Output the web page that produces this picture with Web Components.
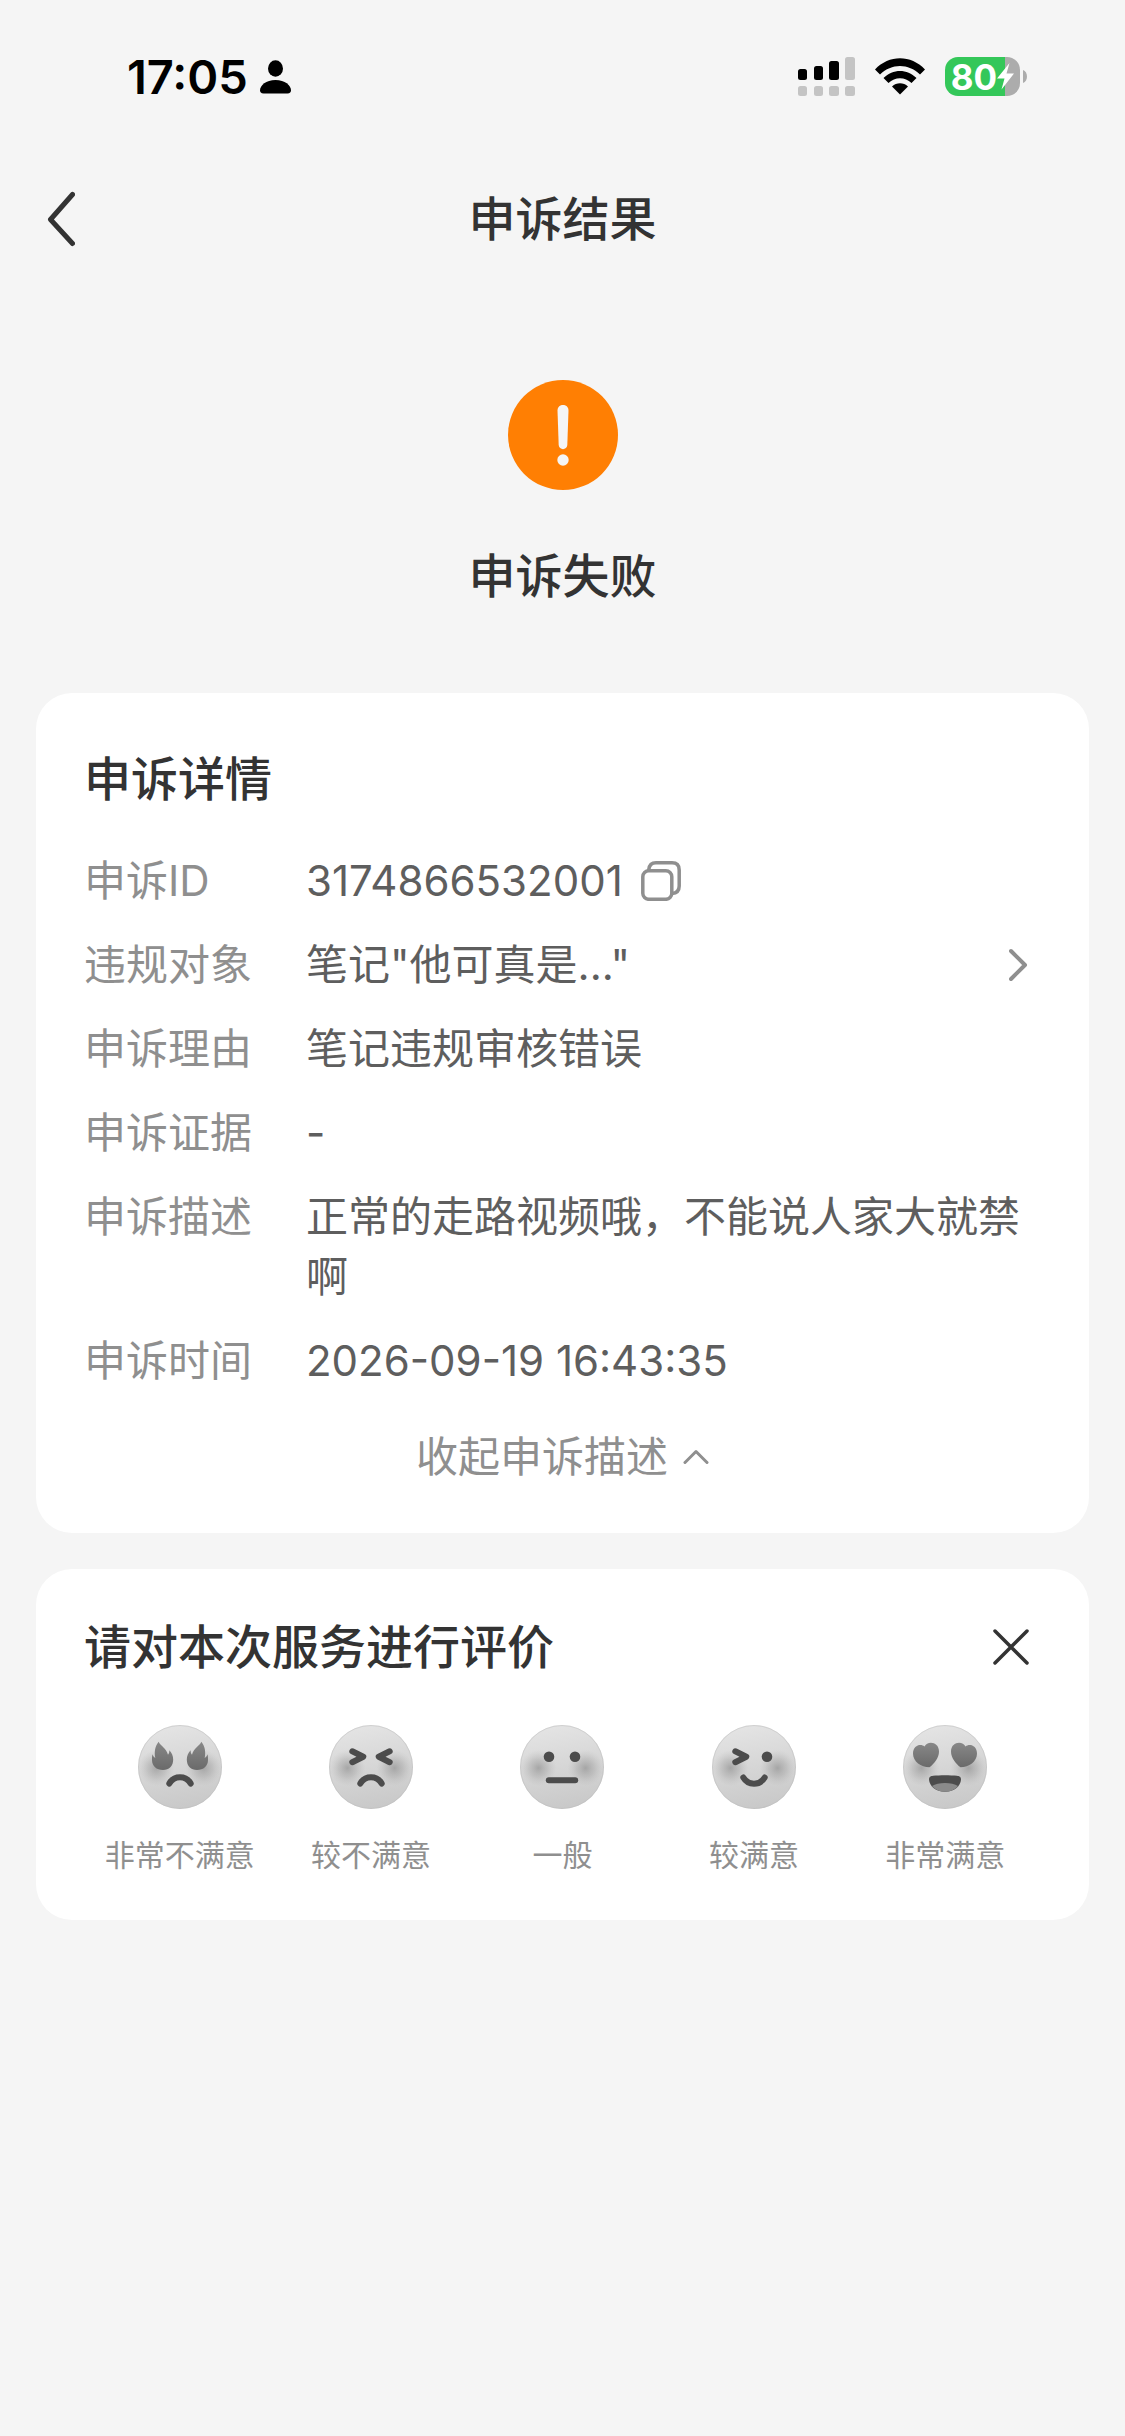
<!DOCTYPE html>
<html lang="zh-CN">
<head>
<meta charset="utf-8">
<meta name="viewport" content="width=device-width, initial-scale=1">
<title>申诉结果</title>
<style>
    body {
        margin: 0;
        background-color: #f5f5f5;
        color: #333;
        font-family: Inter, "Noto Sans CJK SC", sans-serif;
        font-size: 42px;
        line-height: 60px;
    }
    main {
        display: flex;
        flex-direction: column;
        gap: 36px;
        padding: 0 36px 36px;
    }
</style>
</head>
<body>
<status-bar time="17:05" battery="80"></status-bar>
<nav-bar>申诉结果</nav-bar>
<main>
    <result-banner>申诉失败</result-banner>
    <appeal-detail>
        <span slot="title">申诉详情</span>
        <detail-row label="申诉ID">3174866532001<copy-button slot="after"></copy-button></detail-row>
        <detail-row label="违规对象" link>笔记"他可真是..."</detail-row>
        <detail-row label="申诉理由">笔记违规审核错误</detail-row>
        <detail-row label="申诉证据">-</detail-row>
        <detail-row label="申诉描述">正常的走路视频哦，不能说人家大就禁啊</detail-row>
        <detail-row label="申诉时间">2026-09-19 16:43:35</detail-row>
        <span slot="toggle">收起申诉描述</span>
    </appeal-detail>
    <rating-card>请对本次服务进行评价</rating-card>
</main>

<script>
const makeTemplate = html => {
    const template = document.createElement('template');
    template.innerHTML = html;
    return template;
};

class BaseElement extends HTMLElement {
    constructor() {
        super();
        this._shadowRoot = this.attachShadow({ mode: 'open' });
        this._shadowRoot.appendChild(this.constructor.template.content.cloneNode(true));
    }
}

class StatusBar extends BaseElement {
    static template = makeTemplate(`
        <style>
            :host {
                display: flex;
                justify-content: space-between;
                align-items: center;
                height: 153px;
                padding: 0 98px 0 127px;
                color: #000;
            }
            .left, .right {
                display: flex;
                align-items: center;
            }
            .left { gap: 12px; }
            .right { gap: 20px; }
            .time {
                font-size: 47px;
                font-weight: 600;
            }
            svg { display: block; }
            .power {
                display: flex;
                align-items: center;
                gap: 3px;
            }
            .battery {
                display: flex;
                align-items: center;
                justify-content: center;
                box-sizing: border-box;
                width: 75px;
                height: 39px;
                border-radius: 13px;
                background: linear-gradient(90deg, #34c759 80%, #acacac 80%);
                color: #fff;
                font-size: 35px;
                font-weight: 700;
            }
        </style>
        <div class="left">
            <span class="time"></span>
            <svg width="31" height="34" viewBox="0 0 31 34">
                <ellipse cx="15.500" cy="8.500" rx="7.500" ry="8.200"/>
                <path d="M3.500 33.500C1 33.500 0 32.200 0 30.300C0 25.500 6 20 15.500 20S31 25.500 31 30.300C31 32.200 30 33.500 27.500 33.500Z"/>
            </svg>
        </div>
        <div class="right">
            <svg width="57" height="39" viewBox="0 0 57 39">
                <rect y="12" width="9" height="11" rx="2.500"/>
                <rect x="16" y="9" width="9" height="14" rx="2.500"/>
                <rect x="31" y="4" width="10" height="19" rx="2.500"/>
                <g fill="#c4c4c4">
                    <rect x="47" y="0" width="10" height="23" rx="2.500"/>
                    <rect y="29" width="9" height="10" rx="2.500"/>
                    <rect x="16" y="29" width="9" height="10" rx="2.500"/>
                    <rect x="31" y="29" width="10" height="10" rx="2.500"/>
                    <rect x="47" y="29" width="10" height="10" rx="2.500"/>
                </g>
            </svg>
            <svg width="50" height="37" viewBox="0 0 50 37">
                <path d="M0 11.500C14-3.500 36-3.500 50 11.500L45 16.500C33.500 5 16.500 5 5 16.500Z"/>
                <path d="M8.500 20C18 10.500 32 10.500 41.500 20L36.500 25C30 18.700 20 18.700 13.500 25Z"/>
                <path d="M17 28.500C21.500 24.200 28.500 24.200 33 28.500L25 36.500Z"/>
            </svg>
            <div class="power">
                <div class="battery">
                    <span class="level"></span>
                    <svg width="17" height="27" viewBox="0 0 17 27">
                        <path fill="#fff" d="M12.500 0L0 15.500H7.500L4.500 26.500L17 10.500H9.500Z"/>
                    </svg>
                </div>
                <svg width="4" height="13" viewBox="0 0 4 13"><path fill="#acacac" d="M0 0C5.300 2 5.300 11 0 13Z"/></svg>
            </div>
        </div>
    `);
    connectedCallback() {
        this._shadowRoot.querySelector('.time').textContent = this.getAttribute('time');
        this._shadowRoot.querySelector('.level').textContent = this.getAttribute('battery');
    }
}

class NavBar extends BaseElement {
    static template = makeTemplate(`
        <style>
            :host {
                display: grid;
                grid-template-columns: 120px 1fr 120px;
                align-items: center;
                height: 132px;
            }
            button {
                justify-self: start;
                padding: 0 45px;
                border: 0;
                background: none;
            }
            svg { display: block; }
            h1 {
                margin: 0;
                text-align: center;
                font-size: 47px;
                font-weight: 500;
            }
        </style>
        <button type="button" aria-label="返回">
            <svg width="30" height="56" viewBox="0 0 30 56" fill="none" stroke="#333" stroke-width="5" stroke-linecap="round" stroke-linejoin="round">
                <path d="M27.500 3.500L5.500 28.500L27.500 52.500"/>
            </svg>
        </button>
        <h1><slot></slot></h1>
    `);
}

class ResultBanner extends BaseElement {
    static template = makeTemplate(`
        <style>
            :host {
                display: flex;
                flex-direction: column;
                align-items: center;
                gap: 50px;
                padding: 95px 0 45px;
            }
            h2 {
                margin: 0;
                font-size: 47px;
                font-weight: 500;
                line-height: 72px;
            }
        </style>
        <svg width="110" height="110" viewBox="0 0 110 110">
            <circle cx="55" cy="55" r="55" fill="#ff7f03"/>
            <path fill="#f5f5f5" d="M49.500 30.500C49.500 23.200 60.500 23.200 60.500 30.500L59.300 65C59 70.500 51 70.500 50.700 65Z"/>
            <circle cx="55" cy="80" r="5.700" fill="#f5f5f5"/>
        </svg>
        <h2><slot></slot></h2>
    `);
}

class AppealDetail extends BaseElement {
    static template = makeTemplate(`
        <style>
            :host {
                display: block;
                padding: 50px 48px 46px;
                border-radius: 36px;
                background-color: #fff;
            }
            h2 {
                margin: 0 0 36px;
                font-size: 47px;
                font-weight: 500;
                line-height: 72px;
            }
            .rows {
                display: flex;
                flex-direction: column;
                gap: 24px;
            }
            button {
                display: flex;
                align-items: center;
                gap: 15px;
                margin: 36px auto 0;
                padding: 0;
                border: 0;
                background: none;
                color: #8f8f8f;
                font: inherit;
            }
        </style>
        <h2><slot name="title"></slot></h2>
        <div class="rows"><slot></slot></div>
        <button type="button">
            <slot name="toggle"></slot>
            <svg width="26" height="18" viewBox="0 0 26 18" fill="none" stroke="#8f8f8f" stroke-width="3" stroke-linecap="round" stroke-linejoin="round">
                <path d="M2 14.500L13 3.500L24 14.500"/>
            </svg>
        </button>
    `);
}

class DetailRow extends BaseElement {
    static template = makeTemplate(`
        <style>
            :host {
                display: grid;
                grid-template-columns: 222px 1fr auto;
            }
            .label { color: #8f8f8f; }
            .value {
                display: flex;
                align-items: center;
                gap: 18px;
                color: #5e5e5e;
            }
            .go {
                display: none;
                align-self: center;
                padding: 0 12px;
            }
            :host([link]) .go { display: block; }
            svg { display: block; }
        </style>
        <span class="label"></span>
        <div class="value"><span><slot></slot></span><slot name="after"></slot></div>
        <a class="go" href="#" aria-label="查看">
            <svg width="20" height="34" viewBox="0 0 20 34" fill="none" stroke="#8f8f8f" stroke-width="4" stroke-linecap="round" stroke-linejoin="round">
                <path d="M2 3L16 17L2 31"/>
            </svg>
        </a>
    `);
    connectedCallback() {
        this._shadowRoot.querySelector('.label').textContent = this.getAttribute('label');
    }
}

class CopyButton extends BaseElement {
    static template = makeTemplate(`
        <style>
            :host { display: block; }
            button {
                display: block;
                padding: 0;
                border: 0;
                background: none;
            }
            svg { display: block; }
        </style>
        <button type="button" aria-label="复制">
            <svg width="40" height="40" viewBox="0 0 40 40" fill="none" stroke="#8f8f8f" stroke-width="3.500">
                <rect x="1.800" y="9.800" width="29" height="28.500" rx="6"/>
                <path d="M7.800 9.500V8.500Q8.500 1.800 15 1.800H31Q38.200 1.800 38.200 9V25Q38.200 32 31 32.500"/>
            </svg>
        </button>
    `);
}

const flame = '<path d="M20.700 16.700C22 20.500 28.500 23 30 29.800C31 28.500 31.500 27 31.300 25.300C33.800 28 35.200 31 35.200 34.500C35.200 41 31 45 25 45C18.500 45 14 41 14 35C14 32.500 14 31 14.600 29.300C15 31 15.800 32.300 17.300 33C16 27 17 21 20.700 16.700Z"/>';
const heart = '<path d="M26.500 42.300C18 42.300 10 36.500 10 28.500C10 20 18 18.300 21.500 21.500C24 15.500 36 16 36 26.500C36 33 31 39 26.500 42.300Z"/>';
const bothEyes = shape => `<g fill="url(#shade)">${shape}<g transform="translate(84 0) scale(-1 1)">${shape}</g></g>`;
const line = d => `<path class="line" d="${d}"/>`;
const dot = x => `<circle cx="${x}" cy="31.700" r="5.300" fill="#4c4c4c"/>`;

const squintLeft = line('M23.300 26.300L34.300 31.700L23.300 37.200');
const squintRight = line('M60.700 26.300L49.700 31.700L60.700 37.200');
const frown = line('M31.300 58.500C36 50 48 50 52.700 58.500');
const smile = line('M31.300 52.500C36 60.700 48 60.700 52.700 52.500');

const faces = {
    angry: bothEyes(flame) + frown,
    upset: squintLeft + squintRight + frown,
    neutral: dot(29) + dot(55) + line('M28.800 55.300H55.200'),
    happy: squintLeft + dot(55) + smile,
    love: bothEyes(heart) + `
        <path fill="#4c4c4c" d="M26 54.500C26 51.500 28 51 30 50.700C37 50 47 50 54 50.700C56 51 58 51.500 58 54.500C57.500 61.500 51 66.800 42 66.800S26.500 61.500 26 54.500Z"/>
        <path fill="#8a8a8a" d="M29 61C35 57 49 57 55 61C52 64.700 47.500 66.800 42 66.800S32 64.700 29 61Z"/>`
};

class RatingFace extends BaseElement {
    static template = makeTemplate(`
        <style>
            :host { display: block; }
            svg { display: block; }
            .line {
                fill: none;
                stroke: #4c4c4c;
                stroke-width: 6;
                stroke-linecap: round;
                stroke-linejoin: round;
            }
        </style>
        <div></div>
    `);
    connectedCallback() {
        this._shadowRoot.querySelector('div').innerHTML = `
            <svg width="84" height="84" viewBox="0 0 84 84">
                <defs>
                    <linearGradient id="skin" x1="0.4" y1="0" x2="0.6" y2="1">
                        <stop offset="0" stop-color="#e4e4e4"/>
                        <stop offset="1" stop-color="#c8c8c8"/>
                    </linearGradient>
                    <linearGradient id="shade" x1="0" y1="0" x2="0" y2="1">
                        <stop offset="0" stop-color="#888"/>
                        <stop offset="1" stop-color="#6a6a6a"/>
                    </linearGradient>
                    <radialGradient id="blush">
                        <stop offset="0" stop-color="#8c8c8c" stop-opacity="0.65"/>
                        <stop offset="0.5" stop-color="#9a9a9a" stop-opacity="0.35"/>
                        <stop offset="1" stop-color="#b4b4b4" stop-opacity="0"/>
                    </radialGradient>
                    <clipPath id="head"><circle cx="42" cy="42" r="42"/></clipPath>
                </defs>
                <circle cx="42" cy="42" r="42" fill="url(#skin)"/>
                <g clip-path="url(#head)" fill="url(#blush)">
                    <circle cx="18.500" cy="43" r="18"/>
                    <circle cx="65.500" cy="43" r="18"/>
                </g>
                <circle cx="42" cy="42" r="41.500" fill="none" stroke="#bdbdbd" stroke-opacity="0.5"/>
                ${faces[this.getAttribute('mood')]}
            </svg>
        `;
    }
}

class RatingCard extends BaseElement {
    static template = makeTemplate(`
        <style>
            :host {
                display: block;
                padding: 42px 48px;
                border-radius: 36px;
                background-color: #fff;
            }
            header {
                display: flex;
                align-items: center;
                justify-content: space-between;
                margin-bottom: 42px;
            }
            h2 {
                margin: 0;
                font-size: 47px;
                font-weight: 500;
                line-height: 72px;
            }
            button {
                padding: 0 12px;
                border: 0;
                background: none;
            }
            svg { display: block; }
            .options {
                display: grid;
                grid-template-columns: repeat(5, 1fr);
            }
            label {
                display: flex;
                flex-direction: column;
                align-items: center;
                gap: 24px;
                color: #8f8f8f;
                font-size: 30px;
                line-height: 45px;
                white-space: nowrap;
            }
            .face { display: flex; }
            input {
                appearance: none;
                width: 0;
                height: 0;
                margin: 0;
            }
        </style>
        <header>
            <h2><slot></slot></h2>
            <button type="button" aria-label="关闭">
                <svg width="36" height="36" viewBox="0 0 36 36" stroke="#333" stroke-width="3.500" stroke-linecap="round">
                    <path d="M2 2L34 34M34 2L2 34"/>
                </svg>
            </button>
        </header>
        <div class="options" role="radiogroup">
            <label><span class="face"><input type="radio" name="rate" value="1"><rating-face mood="angry"></rating-face></span>非常不满意</label>
            <label><span class="face"><input type="radio" name="rate" value="2"><rating-face mood="upset"></rating-face></span>较不满意</label>
            <label><span class="face"><input type="radio" name="rate" value="3"><rating-face mood="neutral"></rating-face></span>一般</label>
            <label><span class="face"><input type="radio" name="rate" value="4"><rating-face mood="happy"></rating-face></span>较满意</label>
            <label><span class="face"><input type="radio" name="rate" value="5"><rating-face mood="love"></rating-face></span>非常满意</label>
        </div>
    `);
}

customElements.define('status-bar', StatusBar);
customElements.define('nav-bar', NavBar);
customElements.define('result-banner', ResultBanner);
customElements.define('copy-button', CopyButton);
customElements.define('detail-row', DetailRow);
customElements.define('appeal-detail', AppealDetail);
customElements.define('rating-face', RatingFace);
customElements.define('rating-card', RatingCard);
</script>
</body>
</html>
